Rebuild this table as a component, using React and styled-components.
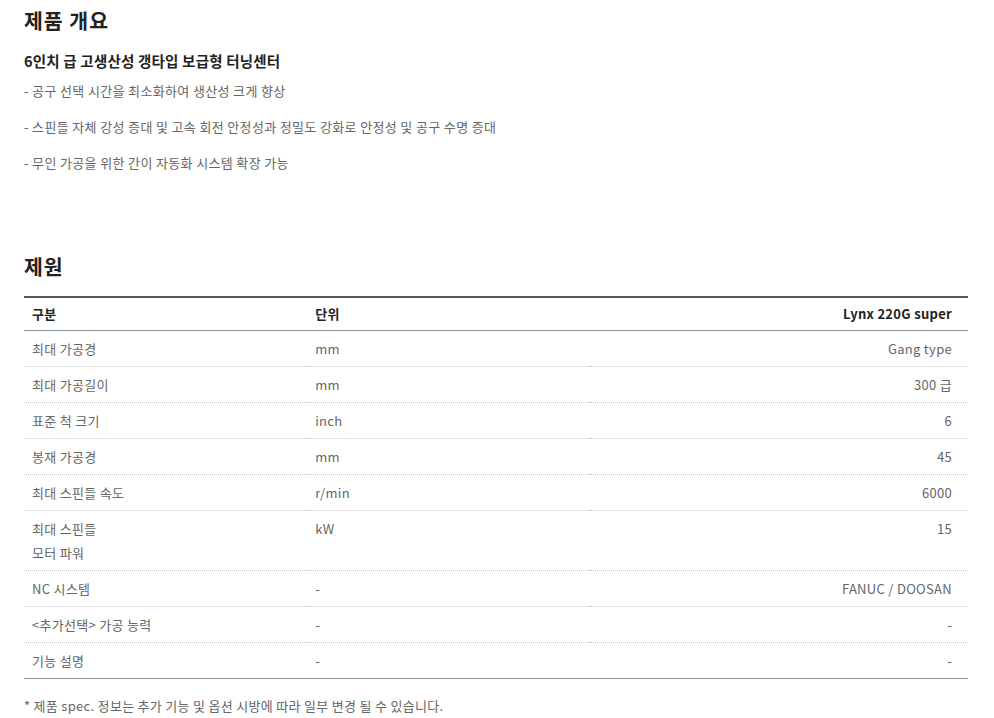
import React from "react";
import styled, { createGlobalStyle } from "styled-components";

const Global = createGlobalStyle`
  html, body { margin: 0; padding: 0; background: #fff; }
  body { font-family: "Noto Sans CJK KR", "Noto Sans", sans-serif; color: #222; }
  * { box-sizing: border-box; }
`;

const Page = styled.div`
  width: 944px;
  margin-left: 24px;
  padding-top: 6px;
`;

const Section = styled.section`
  display: flex;
  flex-direction: column;
  margin-bottom: ${(p) => p.$mb || 0}px;
`;

const Title = styled.h2`
  margin: 0 0 16px;
  font-size: 20.5px;
  line-height: 28px;
  font-weight: 700;
  letter-spacing: 1px;
  color: #222;
`;

const Subtitle = styled.h3`
  margin: 0 0 7px;
  font-size: 14.5px;
  line-height: 22px;
  font-weight: 700;
  letter-spacing: 0.2px;
  color: #222;
`;

const Bullet = styled.p`
  margin: 0 0 12px;
  font-size: 13px;
  line-height: 24px;
  letter-spacing: 0.35px;
  color: #666;
  &:last-child { margin-bottom: 0; }
`;

const Table = styled.table`
  width: 100%;
  border-collapse: collapse;
  border-top: 2px solid #52575c;
  table-layout: fixed;
  font-size: 13px;
  letter-spacing: 0.3px;
`;

const Th = styled.th`
  height: 33px;
  padding: 0 ${(p) => (p.$right ? "16px" : "8px")};
  text-align: ${(p) => (p.$right ? "right" : "left")};
  font-weight: 700;
  color: #222;
  border-bottom: 1px solid #86949a;
  width: ${(p) => p.$w || "auto"};
`;

const Td = styled.td`
  padding: 6px ${(p) => (p.$right ? "16px" : "8px")} 5px;
  line-height: 24px;
  vertical-align: top;
  text-align: ${(p) => (p.$right ? "right" : "left")};
  color: #666;
  border-bottom: 1px dotted #c4c4c4;
`;

const Tr = styled.tr`
  &:last-child td { border-bottom: 1px solid #86949a; }
`;

const Note = styled.p`
  margin: 16px 0 0;
  font-size: 13px;
  line-height: 22px;
  letter-spacing: 0.3px;
  color: #666;
`;

const rows = [
  [["최대 가공경"], "mm", "Gang type"],
  [["최대 가공길이"], "mm", "300 급"],
  [["표준 척 크기"], "inch", "6"],
  [["봉재 가공경"], "mm", "45"],
  [["최대 스핀들 속도"], "r/min", "6000"],
  [["최대 스핀들", "모터 파워"], "kW", "15"],
  [["NC 시스템"], "-", "FANUC / DOOSAN"],
  [["<추가선택> 가공 능력"], "-", "-"],
  [["기능 설명"], "-", "-"],
];

export default function App() {
  return (
    <>
      <Global />
      <Page>
        <Section $mb={77}>
          <Title>제품 개요</Title>
          <Subtitle>6인치 급 고생산성 갱타입 보급형 터닝센터</Subtitle>
          <Bullet>- 공구 선택 시간을 최소화하여 생산성 크게 향상</Bullet>
          <Bullet>- 스핀들 자체 강성 증대 및 고속 회전 안정성과 정밀도 강화로 안정성 및 공구 수명 증대</Bullet>
          <Bullet>- 무인 가공을 위한 간이 자동화 시스템 확장 가능</Bullet>
        </Section>
        <Section>
          <Title>제원</Title>
          <Table>
            <thead>
              <tr>
                <Th $w="30%">구분</Th>
                <Th $w="30%">단위</Th>
                <Th $right>Lynx 220G super</Th>
              </tr>
            </thead>
            <tbody>
              {rows.map(([label, unit, val], i) => (
                <Tr key={i}>
                  <Td>
                    {label.map((l, j) => (
                      <React.Fragment key={j}>
                        {j > 0 && <br />}
                        {l}
                      </React.Fragment>
                    ))}
                  </Td>
                  <Td>{unit}</Td>
                  <Td $right>{val}</Td>
                </Tr>
              ))}
            </tbody>
          </Table>
          <Note>* 제품 spec. 정보는 추가 기능 및 옵션 시방에 따라 일부 변경 될 수 있습니다.</Note>
        </Section>
      </Page>
    </>
  );
}
